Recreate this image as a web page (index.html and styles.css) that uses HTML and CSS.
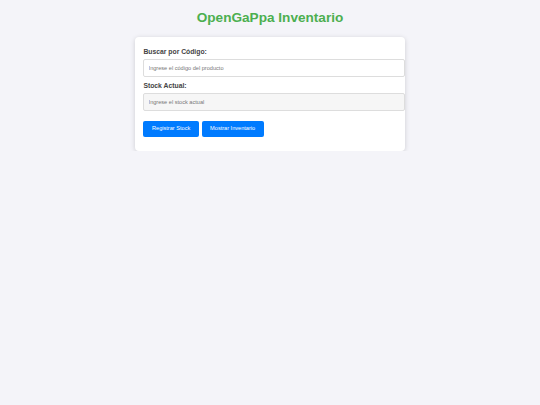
FILE: index.html
```html
<!DOCTYPE html>
<html lang="es">
<head>
<meta charset="utf-8">
<title>OpenGaPpa Inventario</title>
<link rel="stylesheet" href="styles.css">
</head>
<body>
  <h1 class="title">OpenGaPpa Inventario</h1>
  <div class="card">
    <label class="field-label" for="codigo">Buscar por Código:</label>
    <input class="field-input" id="codigo" type="text" placeholder="Ingrese el código del producto">
    <label class="field-label" for="stock">Stock Actual:</label>
    <input class="field-input field-input--muted" id="stock" type="text" placeholder="Ingrese el stock actual">
    <div class="actions">
      <button class="btn" type="button">Registrar Stock</button>
      <button class="btn" type="button">Mostrar Inventario</button>
    </div>
  </div>
</body>
</html>
```

FILE: styles.css
```css
html, body {
  margin: 0;
  padding: 0;
}

body {
  background: #f4f4f9;
  font-family: "Liberation Sans", Arial, sans-serif;
  color: #333;
  overflow: hidden;
}

.title {
  margin: 9.5px 0 12px;
  text-align: center;
  color: #4caf50;
  font-size: 13.6px;
  line-height: 15.5px;
  font-weight: bold;
}

.card {
  box-sizing: border-box;
  width: 270px;
  margin: 0 auto;
  padding: 7.5px 8.4px 8.6px;
  background: #fff;
  border-radius: 4px;
  box-shadow: 0 1px 5px rgba(0, 0, 0, 0.16);
}

.field-label {
  display: block;
  margin: 3px 0 3.5px;
  font-size: 6.8px;
  line-height: 8px;
  font-weight: bold;
  color: #444;
}

.field-input {
  display: block;
  box-sizing: border-box;
  width: 262px;
  height: 17.5px;
  margin: 0 0 5px;
  padding: 0 4.2px;
  border: 1px solid #ddd;
  border-radius: 2px;
  background: #fff;
  font-family: "Liberation Sans", Arial, sans-serif;
  font-size: 5.6px;
  color: #333;
  outline: none;
}

.field-input::placeholder {
  color: #777;
}

.field-input--muted {
  background: #f6f6f6;
}

.actions {
  display: flex;
  gap: 2.7px;
  margin: 10px 0 6px;
}

.btn {
  padding: 4.8px 8.6px;
  border: none;
  border-radius: 2px;
  background: #007bff;
  color: #fff;
  font-family: "Liberation Sans", Arial, sans-serif;
  font-size: 5.6px;
  line-height: 6.4px;
  cursor: pointer;
}
```
